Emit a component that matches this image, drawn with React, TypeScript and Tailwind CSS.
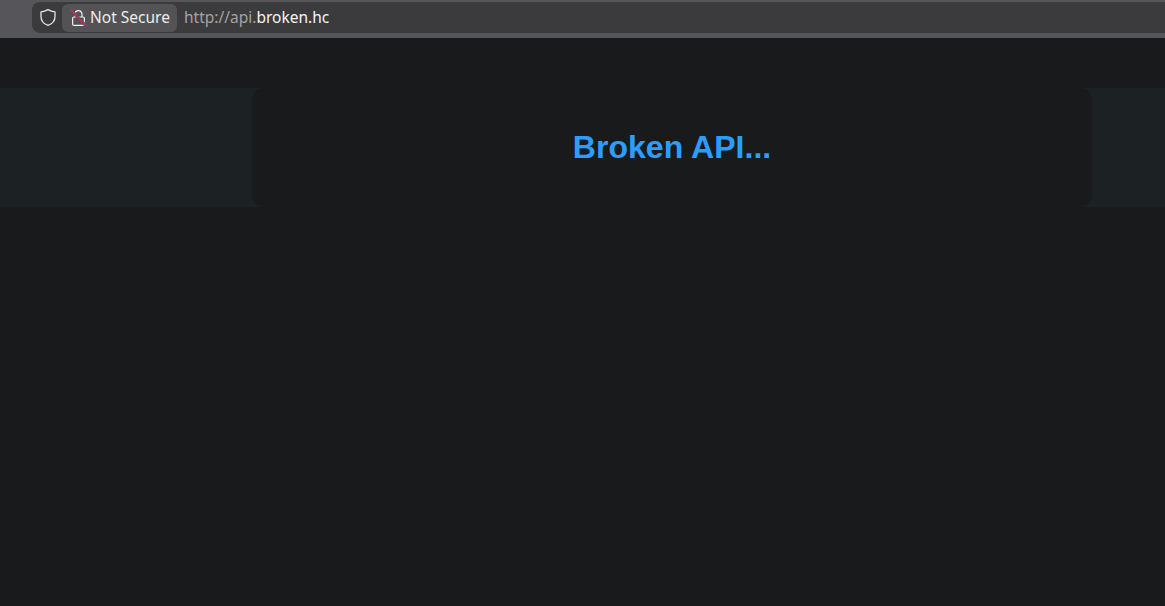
const ShieldOutline = () => (
  <svg width="18" height="19" viewBox="0 0 18 19" fill="none" className="shrink-0">
    <path
      d="M9 1.6c2.2 1.3 4.6 2 7 2.2v4.600c0 4.200-2.800 7.400-7 9-4.200-1.600-7-4.800-7-9V3.800c2.400-.2 4.800-.9 7-2.200Z"
      stroke="#e6e6e6"
      strokeWidth="1.300"
      strokeLinejoin="round"
    />
  </svg>
);

const LockOff = () => (
  <svg width="17" height="18" viewBox="0 0 17 18" fill="none" className="shrink-0">
    <path d="M5 8V5.200a3.500 3.500 0 0 1 7 0V8" stroke="#f0f0f0" strokeWidth="1.200" />
    <rect x="2.600" y="8" width="11.800" height="8.400" rx="1.500" stroke="#f0f0f0" strokeWidth="1.200" />
    <path d="M1 1 16 17" stroke="#535355" strokeWidth="3" />
    <path d="M1 1 16 17" stroke="#d9265c" strokeWidth="1.300" />
  </svg>
);

const App = () => {
  return (
    <div className="flex h-[606px] w-[1165px] flex-col overflow-hidden bg-[#191a1c] font-['Liberation_Sans',sans-serif]">
      <div className="h-[38px] shrink-0 bg-[#56565a] pt-[2px]">
        <div className="ml-8 flex h-[31px] items-center rounded-l-lg bg-[#3b3b3d] pl-[7px]">
          <ShieldOutline />
          <div className="ml-[5px] flex h-[28px] w-[115px] items-center gap-[3px] rounded-md bg-[#535355] pl-2 font-['Noto_Sans',sans-serif] text-[15.500px] text-[#ececec]">
            <LockOff />
            <span>Not Secure</span>
          </div>
          <div className="ml-[7px] font-['Noto_Sans',sans-serif] text-[15.500px] text-[#a3a3a5]">
            http://api.<span className="text-[#f4f4f4]">broken.hc</span>
          </div>
        </div>
      </div>
      <div className="mt-[50px] h-[119px] bg-[#1c2123] pl-[252px]">
        <div className="flex h-full w-[840px] items-center justify-center rounded-xl bg-[#191a1c]">
          <h1 className="text-[32.100px] font-bold text-[#2c9dfd]">Broken API...</h1>
        </div>
      </div>
    </div>
  );
};

export default App;
